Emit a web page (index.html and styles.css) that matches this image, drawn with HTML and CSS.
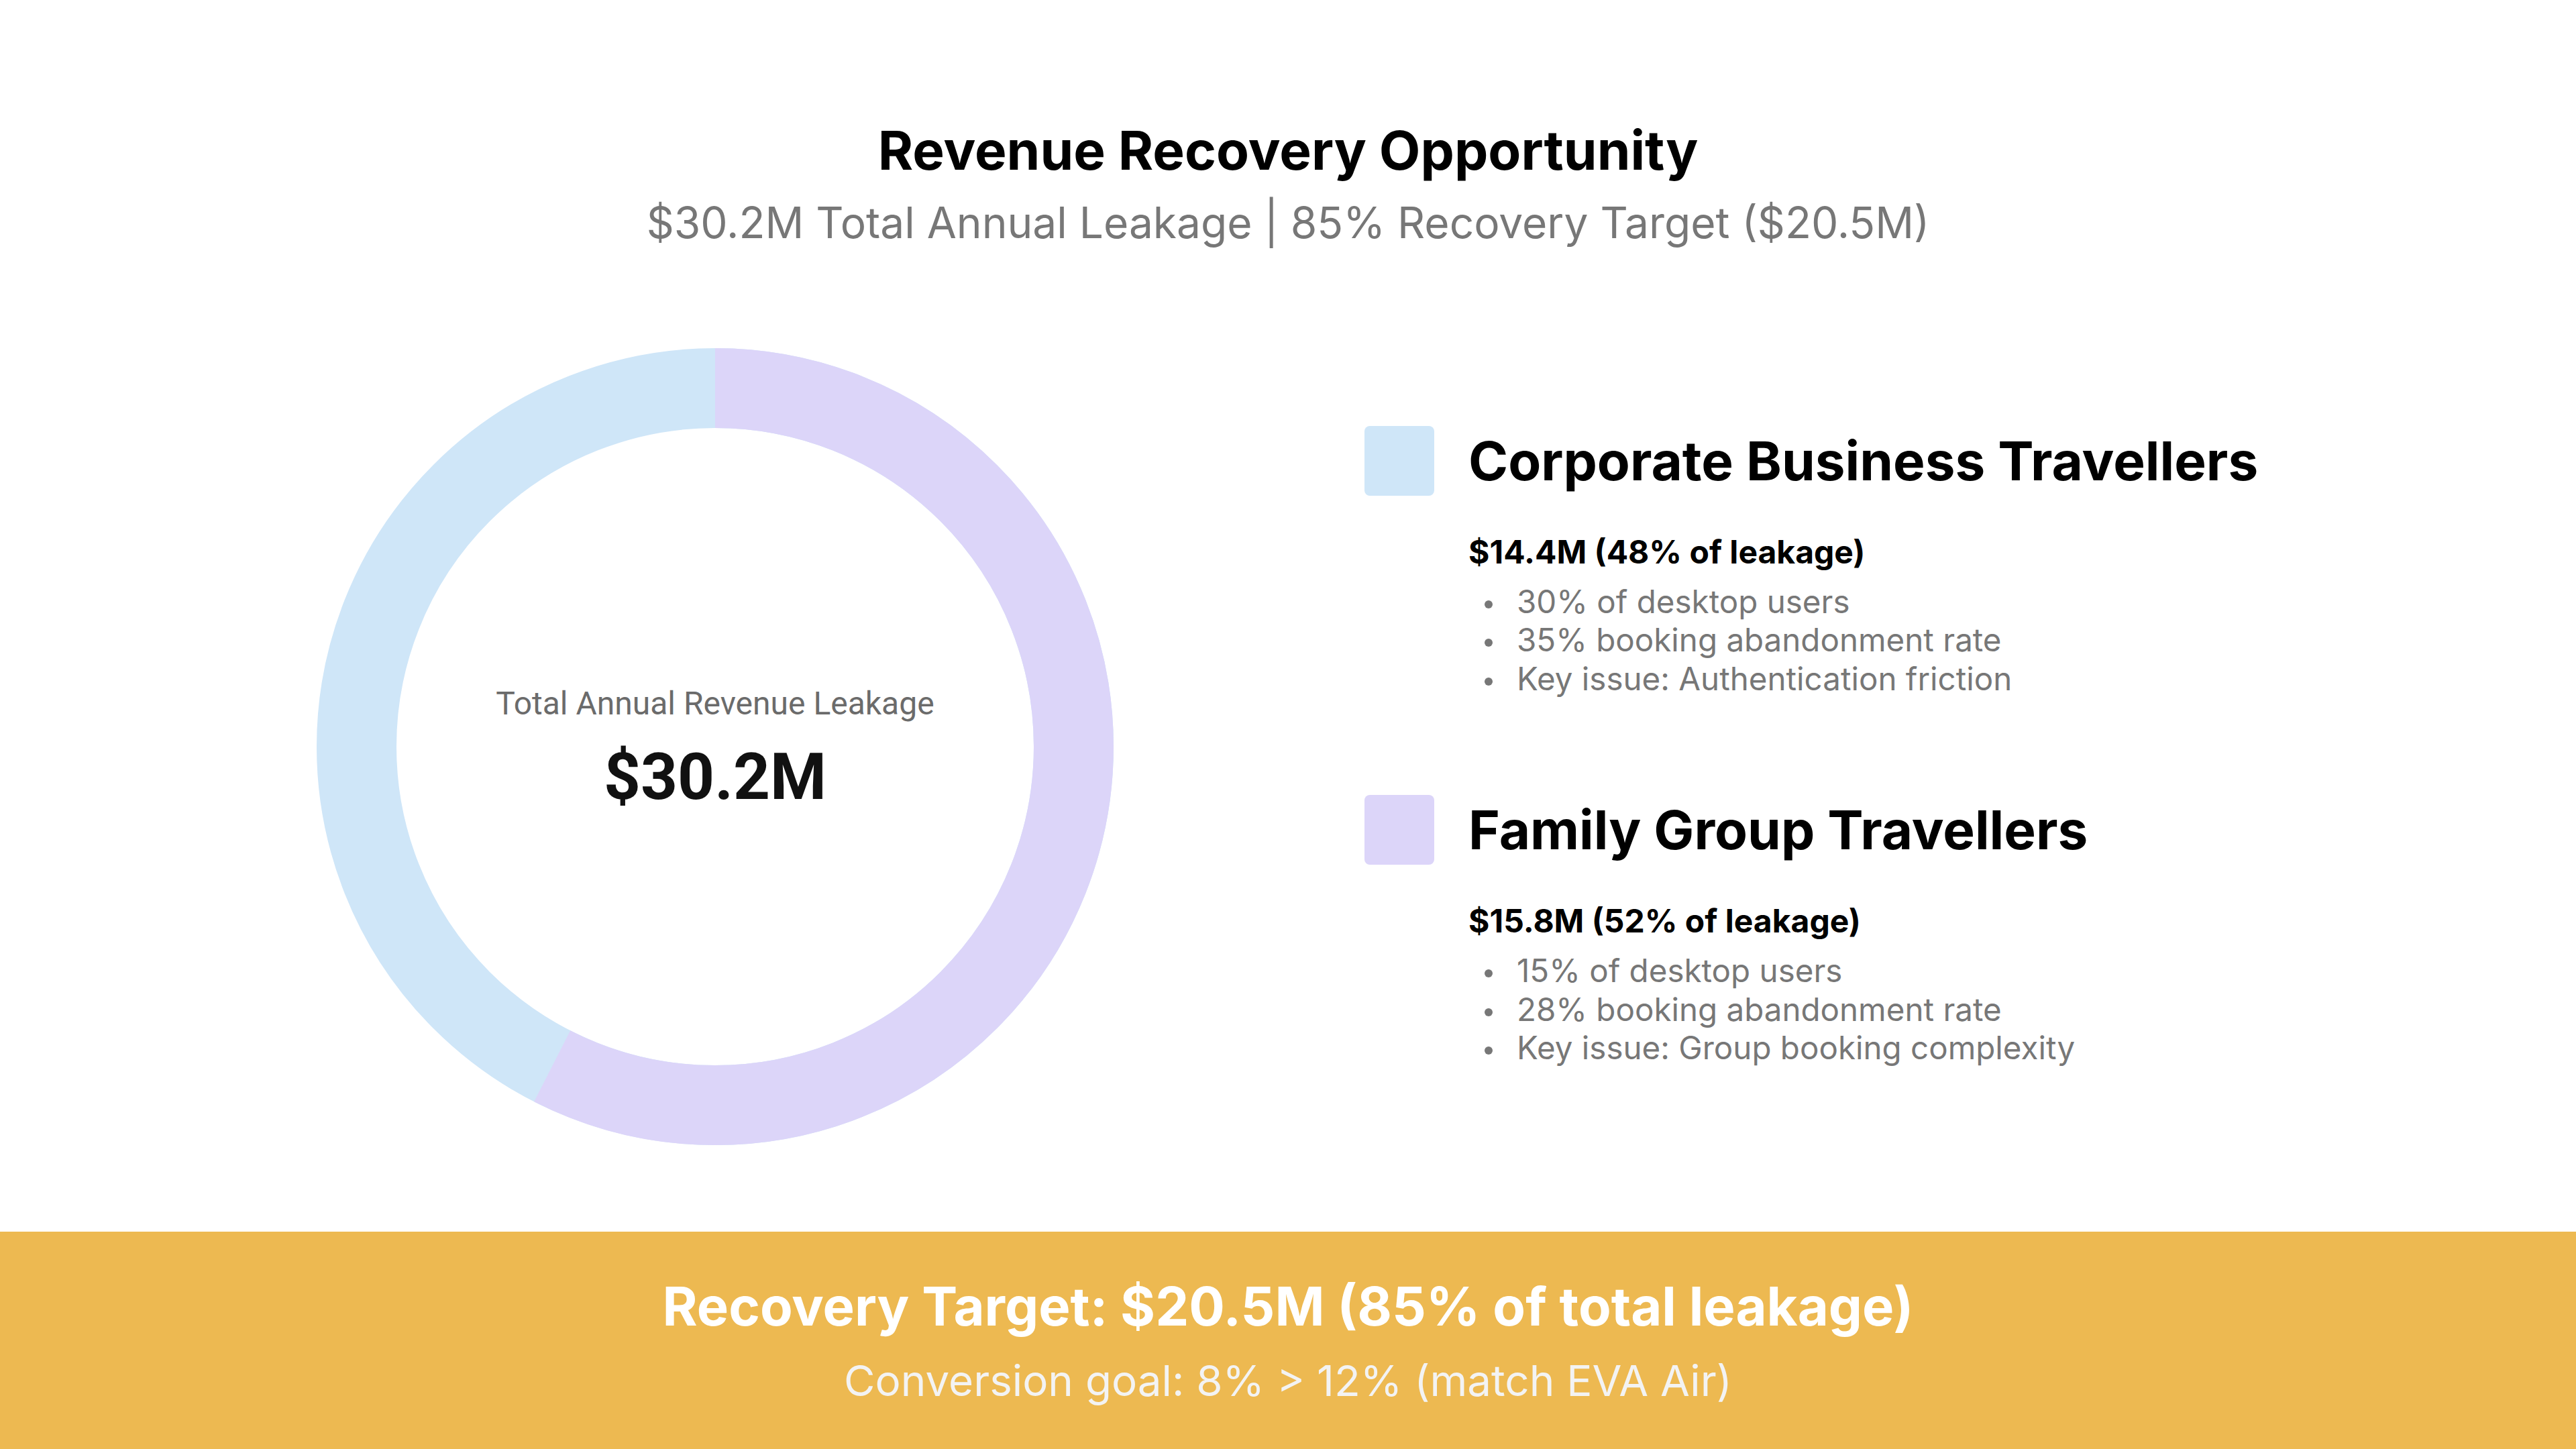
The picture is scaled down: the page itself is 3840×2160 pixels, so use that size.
FILE: index.html
```html
<!DOCTYPE html>
<html lang="en">
<head>
<meta charset="utf-8">
<title>Revenue Recovery Opportunity</title>
<link rel="stylesheet" href="styles.css">
</head>
<body>
<div class="page">
  <header class="header">
    <h1 class="title">Revenue Recovery Opportunity</h1>
    <p class="subtitle">$30.2M Total Annual Leakage | 85% Recovery Target ($20.5M)</p>
  </header>

  <main class="main">
    <div class="chart-col">
      <div class="donut">
        <svg class="donut-svg" width="1188" height="1188" viewBox="0 0 1188 1188">
          <circle cx="594" cy="594" r="534.5" fill="none" stroke="#CFE6F8" stroke-width="119"/>
          <circle cx="594" cy="594" r="534.5" fill="none" stroke="#DCD5F9" stroke-width="119"
                  stroke-dasharray="1931.1 3358.4" transform="rotate(-90 594 594)"/>
        </svg>
        <div class="donut-center">
          <div class="donut-label">Total Annual Revenue Leakage</div>
          <div class="donut-value">$30.2M</div>
        </div>
      </div>
    </div>

    <div class="legend-col">
      <section class="segment">
        <div class="segment-head">
          <span class="swatch swatch-blue"></span>
          <h2 class="segment-title">Corporate Business Travellers</h2>
        </div>
        <div class="segment-body">
          <p class="segment-amount">$14.4M (48% of leakage)</p>
          <ul class="segment-list">
            <li>30% of desktop users</li>
            <li>35% booking abandonment rate</li>
            <li>Key issue: Authentication friction</li>
          </ul>
        </div>
      </section>

      <section class="segment">
        <div class="segment-head">
          <span class="swatch swatch-purple"></span>
          <h2 class="segment-title">Family Group Travellers</h2>
        </div>
        <div class="segment-body">
          <p class="segment-amount">$15.8M (52% of leakage)</p>
          <ul class="segment-list">
            <li>15% of desktop users</li>
            <li>28% booking abandonment rate</li>
            <li>Key issue: Group booking complexity</li>
          </ul>
        </div>
      </section>
    </div>
  </main>

  <footer class="banner">
    <p class="banner-title">Recovery Target: $20.5M (85% of total leakage)</p>
    <p class="banner-sub">Conversion goal: 8% &gt; 12% (match EVA Air)</p>
  </footer>
</div>
</body>
</html>
```

FILE: styles.css
```css
* {
  box-sizing: border-box;
}

html, body {
  margin: 0;
  padding: 0;
  background: #ffffff;
}

body {
  font-family: Inter, "Noto Sans", "Liberation Sans", sans-serif;
  color: #000000;
}

.page {
  width: 3840px;
  height: 2160px;
  display: flex;
  flex-direction: column;
  overflow: hidden;
}

/* Header */
.header {
  padding-top: 176px;
  text-align: center;
  flex: none;
}

.title {
  margin: 0;
  font-size: 80px;
  line-height: 1.2;
  font-weight: 700;
  color: #000000;
}

.subtitle {
  margin: 22px 0 0;
  font-size: 64px;
  line-height: 1.2;
  font-weight: 400;
  color: #777777;
}

/* Main */
.main {
  flex: 1;
  display: grid;
  grid-template-columns: 1480px 1480px;
  column-gap: 228px;
  justify-content: center;
  align-items: center;
  padding-top: 19px;
}

.chart-col {
  display: flex;
  justify-content: center;
  align-items: center;
}

.donut {
  display: grid;
  width: 1188px;
  height: 1188px;
}

.donut-svg,
.donut-center {
  grid-area: 1 / 1;
}

.donut-svg {
  display: block;
}

.donut-center {
  display: flex;
  flex-direction: column;
  align-items: center;
  justify-content: center;
  padding-top: 10px;
  font-family: Roboto, "Liberation Sans", sans-serif;
}

.donut-label {
  font-size: 48px;
  line-height: 1.2;
  color: #6b6b6b;
}

.donut-value {
  margin-top: 23px;
  font-size: 96px;
  line-height: 1.2;
  font-weight: 700;
  color: #111111;
}

/* Legend */
.legend-col {
  display: flex;
  flex-direction: column;
  gap: 145px;
}

.segment-head {
  display: flex;
  align-items: center;
  gap: 51px;
}

.swatch {
  flex: none;
  width: 104px;
  height: 104px;
  border-radius: 8px;
}

.swatch-blue {
  background: #CFE6F8;
}

.swatch-purple {
  background: #DCD5F9;
}

.segment-title {
  margin: 0;
  font-size: 80px;
  line-height: 1.2;
  font-weight: 700;
  color: #000000;
}

.segment-body {
  padding-left: 155px;
}

.segment-amount {
  margin: 48px 0 0;
  font-size: 48px;
  line-height: 1.5;
  font-weight: 700;
  color: #000000;
}

.segment-list {
  list-style: none;
  margin: 9px 0 0;
  padding: 0;
}

.segment-list li {
  font-size: 47.5px;
  line-height: 57.5px;
  color: #777777;
}

.segment-list li::before {
  content: "";
  display: inline-block;
  width: 12px;
  height: 12px;
  border-radius: 50%;
  background: #777777;
  margin: 0 36px 0 24px;
  vertical-align: middle;
}

/* Banner */
.banner {
  flex: none;
  height: 324px;
  background: #EDB951;
  text-align: center;
  padding-top: 64px;
}

.banner-title {
  margin: 0;
  font-size: 79.5px;
  line-height: 1.2;
  font-weight: 700;
  color: #ffffff;
}

.banner-sub {
  margin: 25px 0 0;
  font-size: 63.7px;
  line-height: 1.2;
  font-weight: 400;
  color: #f3f3f3;
}
```
